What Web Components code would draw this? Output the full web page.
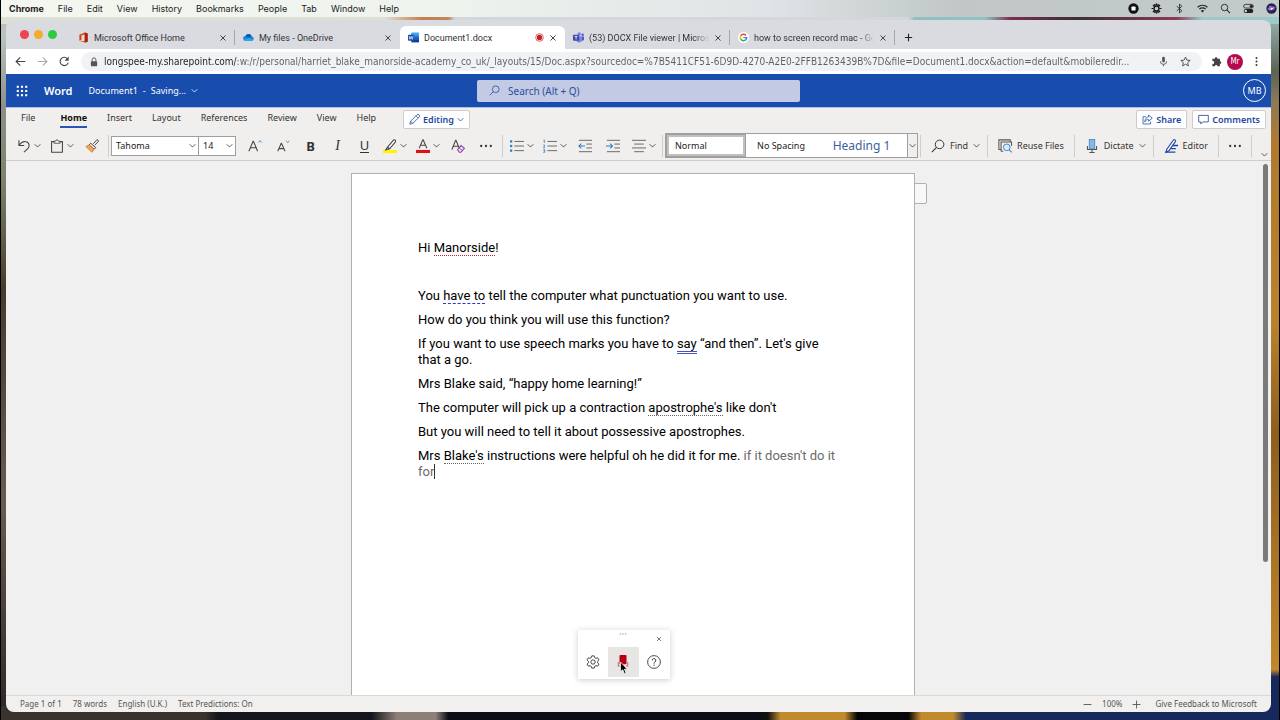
<!DOCTYPE html>
<html lang="en">
<head>
<meta charset="utf-8">
<title>Document1.docx</title>
<style>
html, body { margin: 0; height: 100%; }
body { font-family: "Noto Sans", sans-serif; font-size: 9px; line-height: 12px; color: #333; }
</style>
</head>
<body>
<mac-desktop></mac-desktop>
<script>
const ICONS = {
  stop: '<circle cx="8" cy="8" r="7.5" fill="#111"/><rect x="5" y="5" width="6" height="6" rx="1" fill="#fff"/>',
  burst: '<g stroke="#111" stroke-width="1.8" fill="none"><circle cx="8" cy="8" r="3.6"/><path d="M8 .8v3M8 12.2v3M.8 8h3M12.2 8h3M2.9 2.9l2.2 2.2M10.9 10.9l2.2 2.2M2.9 13.1l2.2-2.2M10.9 5.1l2.2-2.2M5.2 1.3l1.2 2.8M9.6 11.9l1.2 2.8M10.8 1.3L9.6 4.1M6.4 11.9l-1.2 2.8"/></g>',
  bluetooth: '<path d="M4 4.6l7.4 6.6L8 14.6V1.4l3.4 3.4L4 11.4" fill="none" stroke="#222" stroke-width="1.2"/>',
  wifi: '<g fill="none" stroke="#222" stroke-width="1.7"><path d="M.8 6.2a10.2 10.2 0 0 1 14.4 0M3.4 9a6.5 6.5 0 0 1 9.2 0"/></g><path d="M5.6 11.2a3.4 3.4 0 0 1 4.8 0L8 13.8z" fill="#222"/>',
  find: '<circle cx="6.6" cy="6.6" r="4.7" fill="none" stroke="#222" stroke-width="1.3"/><path d="M10 10l4.6 4.6" stroke="#222" stroke-width="1.5"/>',
  control: '<rect x="1" y="2" width="14" height="5.4" rx="2.7" fill="none" stroke="#222" stroke-width="1.2"/><rect x="1" y="8.8" width="14" height="5.6" rx="2.8" fill="#222"/><circle cx="12" cy="4.7" r="2.2" fill="#222"/><circle cx="4" cy="11.6" r="1.7" fill="#ddd"/>',
  siri: '<circle cx="8" cy="8" r="7.5" fill="#2a2350"/><path d="M2 9c3-5 9-5 12-2-4 4-8 5-12 2z" fill="#4a8fe8"/><path d="M4 5c4-2 7 1 8 5-4 0-7-2-8-5z" fill="#d64fae"/><path d="M6 8l5-1-3 3z" fill="#fff"/>',
  close: '<path d="M3 3l10 10M13 3L3 13" stroke="#333" stroke-width="1.8"/>',
  plus: '<path d="M8 1.5v13M1.5 8h13" stroke="#222" stroke-width="2"/>',
  office: '<path d="M2 4L10 .8l4 1.2v12l-4 1.2-8-2.6 7.6 1V3.6L5 4.8v6.4l-3 1.4z" fill="#d9400f"/><path d="M10 .8l4 1.2v12l-4 1.2z" fill="#a8220c"/>',
  onedrive: '<path d="M4 13a3.6 3.6 0 0 1-.4-7.2A5 5 0 0 1 12.6 6 3.6 3.6 0 0 1 13 13z" fill="#1683d8"/><path d="M3.6 5.8A5 5 0 0 1 12.6 6L8 9z" fill="#0b5cad"/><path d="M1 11.5L8 8.4l6.6 3A3 3 0 0 1 13 13H4a3.4 3.4 0 0 1-3-1.5z" fill="#2ba7ef"/>',
  word: '<rect x="5" y="1" width="11" height="14" rx="1" fill="#2b7cd3"/><path d="M5 1h11v4H5z" fill="#41a5ee"/><path d="M5 11h11v4H5z" fill="#103f91"/><path d="M5 8h11v3H5z" fill="#185abd"/><rect x="0" y="4" width="9" height="8.6" rx="1" fill="#1a4fa8"/><path d="M1.6 6l1.2 4.6L4.5 6.4l1.7 4.2L7.4 6" fill="none" stroke="#fff" stroke-width="1"/>',
  teams: '<circle cx="9" cy="3" r="2.6" fill="#7b83eb"/><circle cx="14" cy="4" r="1.8" fill="#5059c9"/><path d="M12 6.4h4v4.4a2.6 2.6 0 0 1-4 1z" fill="#5059c9"/><path d="M5 6.4h8v5a4 4 0 0 1-8 0z" fill="#7b83eb"/><rect x="0" y="4" width="9" height="8.6" rx="1" fill="#4049a8"/><path d="M2.4 6.4h4.2M4.5 6.4v4.4" stroke="#fff" stroke-width="1.1"/>',
  google: '<circle cx="8" cy="8" r="8" fill="#fff"/><g fill="none" stroke-width="2.1"><path d="M11.6 5A4.7 4.7 0 0 0 4 5.6" stroke="#ea4335"/><path d="M4 5.5a4.7 4.7 0 0 0 0 5" stroke="#fbbc05"/><path d="M3.9 10.4a4.7 4.7 0 0 0 7.4 1" stroke="#34a853"/><path d="M8 8.2h4.7a4.7 4.7 0 0 1-1.5 3.3" stroke="#4285f4"/></g>',
  rec: '<circle cx="8" cy="8" r="6.8" fill="none" stroke="#c5221f" stroke-width="1.2"/><circle cx="8" cy="8" r="4.7" fill="#c5221f"/>',
  back: '<path d="M15 8H2M7.6 2L1.6 8l6 6" fill="none" stroke="#444" stroke-width="1.6"/>',
  forward: '<path d="M1 8h13M8.4 2l6 6-6 6" fill="none" stroke="#aaa" stroke-width="1.6"/>',
  reload: '<path d="M13.4 9.6A6 6 0 1 1 12.2 4" fill="none" stroke="#444" stroke-width="1.6"/><path d="M14 .8v6H8z" fill="#444"/>',
  lock: '<rect x="3" y="6.6" width="10" height="8" rx="1" fill="#555"/><path d="M5 7V4.4a3 3 0 0 1 6 0V7" fill="none" stroke="#555" stroke-width="1.5"/>',
  mic: '<rect x="6" y="1" width="4" height="8.4" rx="2" fill="#555"/><path d="M3.4 7.6a4.6 4.6 0 0 0 9.2 0M8 12.2V15" fill="none" stroke="#555" stroke-width="1.3"/>',
  star: '<path d="M8 1.5l2 4.5 4.8.4-3.6 3.2 1 4.8L8 11.9l-4.2 2.5 1-4.8L1.2 6.4 6 6z" fill="none" stroke="#444" stroke-width="1.3"/>',
  puzzle: '<path d="M2 4h3.4a2 2 0 1 1 4 0H13v3.6a2 2 0 1 1 0 4V15H9.4a1.9 1.9 0 1 0-3.8 0H2v-3.6a2 2 0 1 0 0-3.8z" fill="#444"/>',
  kebab: '<g fill="#333"><circle cx="8" cy="2.8" r="1.4"/><circle cx="8" cy="8" r="1.4"/><circle cx="8" cy="13.2" r="1.4"/></g>',
  waffle: '<g fill="#fff"><rect x="1" y="1" width="2.8" height="2.8"/><rect x="6.6" y="1" width="2.8" height="2.8"/><rect x="12.2" y="1" width="2.8" height="2.8"/><rect x="1" y="6.6" width="2.8" height="2.8"/><rect x="6.6" y="6.6" width="2.8" height="2.8"/><rect x="12.2" y="6.6" width="2.8" height="2.8"/><rect x="1" y="12.2" width="2.8" height="2.8"/><rect x="6.6" y="12.2" width="2.8" height="2.8"/><rect x="12.2" y="12.2" width="2.8" height="2.8"/></g>',
  chevron: '<path d="M1.5 5L8 11.5 14.5 5" fill="none" stroke="currentColor" stroke-width="1.8"/>',
  lens: '<circle cx="9.8" cy="6.2" r="4.9" fill="none" stroke="currentColor" stroke-width="1.1"/><path d="M6.3 9.7L1 15" stroke="currentColor" stroke-width="1.2"/>',
  pencil: '<path d="M1.2 14.8l1.2-4.4L11.6 1.2a1.9 1.9 0 0 1 3.2 3.2L5.6 13.6zM2.4 10.4l3.2 3.2M10.2 2.6l3.2 3.2" fill="none" stroke="currentColor" stroke-width="1.1"/>',
  share: '<path d="M6 4H1.5v10.5h11V11M9.5 1.5L15 6l-5.500 4.500V8C7 8 5.400 9 4 11.500 4.500 7 6.500 4.500 9.500 4.200z" fill="none" stroke="currentColor" stroke-width="1.1"/>',
  comment: '<path d="M1 2h14v9.500H7L4 14.500v-3H1z" fill="none" stroke="currentColor" stroke-width="1.2"/>',
  undo: '<path d="M2.200 1.500v6h6M2.200 7.200C5 3.500 8.500 2 11.500 3.500c3 1.700 3.200 5 .8 7.500L8 15" fill="none" stroke="#444" stroke-width="1.200"/>',
  clip: '<path d="M4.500 3H1.800v12.200h12.400V3h-2.700" fill="none" stroke="#444" stroke-width="1.200"/><path d="M4.500 4.800V2.500h2a1.500 1.500 0 0 1 3 0h2v2.300z" fill="#fff" stroke="#444"/>',
  painter: '<path d="M9.500 5.500L13 1.400a1.300 1.300 0 0 1 2 1.800L11.200 7" fill="#eee" stroke="#444" stroke-width="1.100"/><path d="M6.500 4.800l5.800 5-1.800 2-5.800-5z" fill="#eee" stroke="#444" stroke-width="1.100"/><path d="M4.700 6.800l5.600 5L8 15.200 1 8.600z" fill="#f3a660" stroke="#d9731a" stroke-width="1"/>',
  growA: '<g fill="none" stroke="#444" stroke-width="1.200"><path d="M1 14L5.800 2.500h.4L11 14M2.700 10h6.600"/></g><path d="M12 4l1.900-2.200L15.800 4" fill="none" stroke="#3a86c8"/>',
  shrinkA: '<g fill="none" stroke="#444" stroke-width="1.200"><path d="M2 14L6 5h.300L10.300 14M3.500 11h5.300"/></g><path d="M11.500 2l1.900 2.200L15.300 2" fill="none" stroke="#3a86c8"/>',
  highlight: '<rect x="0" y="12.500" width="16" height="3.500" fill="#fff500"/><path d="M5 9.500L11.700 1.500a1.500 1.500 0 0 1 2.300 2L7.800 11zM5 9.500l-1.800 2.800 4.600-1.300" fill="#fff" stroke="#444" stroke-width="1.200"/>',
  fontcolor: '<rect x="0" y="12.500" width="16" height="3.500" fill="#e01010"/><path d="M3.600 10.500L7.800.8h.4l4.200 9.700M5 7.200h6" fill="none" stroke="#444" stroke-width="1.200"/>',
  clear: '<path d="M1 12L5.300 1.500h.4L9.500 10.500M2.600 8.300h6" fill="none" stroke="#444" stroke-width="1.200"/><path d="M7.500 12l4-4.500 3.800 3.200-4 4.500H9.500z" fill="#f0e0f4" stroke="#8a3fa0" stroke-width="1.200"/><path d="M9.300 10l3.800 3.300" stroke="#8a3fa0"/>',
  dots: '<g fill="#333"><circle cx="2.500" cy="8" r="1.300"/><circle cx="8" cy="8" r="1.300"/><circle cx="13.500" cy="8" r="1.300"/></g>',
  bullets: '<g fill="#2f7fc2"><rect x="0" y="1.500" width="2.600" height="2.600"/><rect x="0" y="6.700" width="2.600" height="2.600"/><rect x="0" y="12" width="2.600" height="2.600"/></g><path d="M5 2.800h11M5 8h11M5 13.300h11" stroke="#666" stroke-width="1.100"/>',
  numbers: '<path d="M.5 1.500l1-.5v3.600M.3 6.800h1.500v1.300L.4 9.700h1.800M.3 11.800h1.600v3.500H.3M.6 13.500h1.300" fill="none" stroke="#2f7fc2" stroke-width=".9"/><path d="M5 2.800h11M5 8h11M5 13.300h11" stroke="#666" stroke-width="1.100"/>',
  outdent: '<path d="M1 1.500h15M9.500 5.800H16M9.500 10.200H16M1 14.500h15" stroke="#666" stroke-width="1.100"/><path d="M8 8H1M3.800 5.200L1 8l2.800 2.800" fill="none" stroke="#2f7fc2" stroke-width="1.200"/>',
  indent: '<path d="M1 1.500h15M9.500 5.800H16M9.500 10.200H16M1 14.500h15" stroke="#666" stroke-width="1.100"/><path d="M0 8h7.500M4.700 5.200L7.500 8l-2.800 2.800" fill="none" stroke="#2f7fc2" stroke-width="1.200"/>',
  align: '<path d="M0 1.500h16M2.500 5.800h11M0 10.200h16M2.500 14.500h11" stroke="#666" stroke-width="1.100"/>',
  reuse: '<path d="M3 12H1V1h13v2M3.500 14V3.500H15.500V8M6 14H3.500" fill="none" stroke="#555" stroke-width="1.200"/><circle cx="10" cy="9.500" r="3.800" fill="#dbeaf8" stroke="#3a86c8" stroke-width="1.100"/><path d="M12.800 12.300l3 3" stroke="#3a86c8" stroke-width="1.200"/>',
  dictate: '<rect x="4.800" y=".6" width="6.400" height="10.800" fill="#83b9ea" stroke="#3f79b5" stroke-width=".8"/><path d="M2.800 8v4h10.400V8M8 12v3.400M5 15.400h6" fill="none" stroke="#555" stroke-width="1.200"/>',
  editor: '<path d="M3 12L10.600 1.400a1.400 1.400 0 0 1 2.400 1.600L5.800 13.200 2.600 15z" fill="#fff" stroke="#1b49a5" stroke-width="1.300"/><path d="M9.500 7.500H16M8 11h5.500M1 15h12" stroke="#1b49a5" stroke-width="1.600"/>',
  gear: '<path d="M6.600 1h2.800l.5 2 1.500.8 2-.6 1.400 2.400-1.500 1.500v1.800l1.500 1.500-1.400 2.400-2-.6-1.500.8-.5 2H6.600l-.5-2-1.500-.8-2 .6-1.400-2.400 1.500-1.500V7.100L1.200 5.600l1.400-2.400 2 .6L6.100 3z" fill="none" stroke="#333"/><circle cx="8" cy="8" r="2.500" fill="none" stroke="#333"/>',
  help: '<circle cx="8" cy="8" r="7.300" fill="none" stroke="#333"/><path d="M5.900 6.200A2.100 2.100 0 1 1 9 8c-.7.500-1 .9-1 1.900M8 11v1.300" fill="none" stroke="#333" stroke-width="1.100"/>',
  record: '<rect x="4" y="0" width="8" height="10.500" rx="1" fill="#b3000c"/><path d="M2.600 8v4.500h3M13.400 8v4.500h-2M8 10v4.500" stroke="#d2686e" stroke-width="1.200" fill="none"/>',
  pointer: '<path d="M2 0v13l3-2.800L7.200 15.500l2.200-1L7.200 9.500H11z" fill="#000" stroke="#fff"/>',
  minus: '<path d="M1 8h14" stroke="#555" stroke-width="1.600"/>',
  add: '<path d="M1 8h14M8 1v14" stroke="#555" stroke-width="1.600"/>'
};

const BASE = `
  *, *::before, *::after { box-sizing: border-box; }
  button, input, select { font: inherit; color: inherit; margin: 0; padding: 0; border: 0; background: none; border-radius: 0; outline: 0; }
  button { display: flex; align-items: center; justify-content: center; white-space: nowrap; }
  a { color: inherit; text-decoration: none; }
  nav { display: flex; }
`;

function define(name, css, html) {
  const template = document.createElement('template');
  template.innerHTML = `<style>${BASE}${css}</style>${html}`;
  customElements.define(name, class extends HTMLElement {
    constructor() {
      super();
      this.attachShadow({ mode: 'open' }).append(template.content.cloneNode(true));
    }
  });
}

/* Single glyph; size comes from --size */
customElements.define('ui-icon', class extends HTMLElement {
  static observedAttributes = ['name'];
  constructor() { super(); this.attachShadow({ mode: 'open' }); }
  attributeChangedCallback() {
    this.shadowRoot.innerHTML = `<style>:host{display:block;flex:none;width:var(--size,14px);height:var(--size,14px)}svg{display:block;width:100%;height:100%;overflow:visible}</style><svg viewBox="0 0 16 16" aria-hidden="true">${ICONS[this.getAttribute('name')]}</svg>`;
  }
});

/* Browser tab: the title goes in the slot */
customElements.define('browser-tab', class extends HTMLElement {
  constructor() { super(); this.attachShadow({ mode: 'open' }); }
  connectedCallback() {
    const rec = this.hasAttribute('recording') ? '<ui-icon name="rec" class="rec"></ui-icon>' : '';
    this.shadowRoot.innerHTML = `<style>${BASE}
      :host { display: flex; align-items: center; flex: 0 1 165px; min-width: 0; height: 23px; padding: 0 7px 0 8px; gap: 5px; border-right: 1px solid transparent; box-sizing: border-box; --size: 11px; }
      :host([divider]) { border-image: linear-gradient(transparent 5px, #a3a6ab 5px 18px, transparent 18px) 1; }
      :host([active]) { background: #fff; border-radius: 6px 6px 0 0; }
      .title { flex: 1; min-width: 0; overflow: hidden; white-space: nowrap; }
      :host([fade]) .title { mask-image: linear-gradient(90deg, #000 88%, transparent); }
      .rec { --size: 9px; }
      .x { --size: 8px; }
      </style><ui-icon name="${this.getAttribute('icon')}"></ui-icon><span class="title"><slot></slot></span>${rec}<button class="x" aria-label="Close tab"><ui-icon name="close"></ui-icon></button>`;
  }
});

/* Ribbon command: icon, optional label and optional menu arrow */
customElements.define('ribbon-command', class extends HTMLElement {
  constructor() { super(); this.attachShadow({ mode: 'open' }); }
  connectedCallback() {
    const icon = this.getAttribute('icon');
    const menu = this.hasAttribute('menu') ? '<ui-icon class="arrow" name="chevron"></ui-icon>' : '';
    this.shadowRoot.innerHTML = `<style>${BASE}
      :host { display: block; flex: none; }
      button { height: 24px; width: 28px; color: #333; }
      :host([letter]) button { width: 27px; font-size: 13px; }
      :host([menu]) button { width: 33px; gap: 3px; }
      :host([labelled]) button { width: auto; gap: 5px; padding: 0 8px; --size: 14px; }
      :host([labelled][menu]) button { padding-right: 5px; }
      .arrow { --size: 7px; }
      </style><button aria-label="${this.getAttribute('label')}">${icon ? `<ui-icon name="${icon}"></ui-icon>` : ''}<slot></slot>${menu}</button>`;
  }
});

define('mac-menubar', `
  :host { display: flex; align-items: center; justify-content: space-between; height: 17px; padding: 0 2px 0 8px; font: 9px/12px Inter, sans-serif; color: #1c1c1c;
    background: linear-gradient(90deg, #f4f7ef, #eef3ee 35%, #dfe4e6 60%, #c0c7c6 75%, #c3cbca); }
  nav { gap: 14px; }
  .status { display: flex; gap: 12px; --size: 11px; }
  strong { font-weight: 700; }
`, `
  <nav><strong>Chrome</strong><span>File</span><span>Edit</span><span>View</span><span>History</span><span>Bookmarks</span><span>People</span><span>Tab</span><span>Window</span><span>Help</span></nav>
  <div class="status"><ui-icon name="stop"></ui-icon><ui-icon name="burst"></ui-icon><ui-icon name="bluetooth"></ui-icon><ui-icon name="wifi"></ui-icon><ui-icon name="find"></ui-icon><ui-icon name="control"></ui-icon><ui-icon name="siri"></ui-icon></div>
`);

define('tab-strip', `
  :host { display: flex; align-items: flex-end; height: 29px; background: #d9dbe0; font: 9px/12px Roboto, sans-serif; color: #333; }
  .lights { display: flex; gap: 5px; width: 64px; padding: 0 0 10px 14px; }
  .lights i { width: 9px; height: 9px; border-radius: 50%; background: var(--c); }
  .new { height: 23px; width: 26px; --size: 9px; }
`, `
  <div class="lights"><i style="--c:#ee4452"></i><i style="--c:#f5ac2d"></i><i style="--c:#2fcb3e"></i></div>
  <browser-tab icon="office" divider>Microsoft Office Home</browser-tab>
  <browser-tab icon="onedrive">My files - OneDrive</browser-tab>
  <browser-tab icon="word" active recording>Document1.docx</browser-tab>
  <browser-tab icon="teams" divider fade>(53) DOCX File viewer | Micros</browser-tab>
  <browser-tab icon="google" divider fade>how to screen record mac - Go</browser-tab>
  <button class="new" aria-label="New tab"><ui-icon name="plus"></ui-icon></button>
`);

define('address-bar', `
  :host { display: flex; align-items: center; height: 25px; padding: 0 9px; background: #fff; font: 10px/14px "DejaVu Sans Condensed", "DejaVu Sans", sans-serif; --size: 11px; }
  .nav { width: 22px; justify-content: flex-start; }
  .box { flex: 1; display: flex; align-items: center; height: 19px; padding: 0 8px; gap: 5px; border-radius: 10px; background: #f1f2f5; margin-right: 9px; }
  .box button { width: 17px; }
  input { flex: 1; min-width: 0; height: 19px; color: #4c4f53; -webkit-text-fill-color: transparent; -webkit-background-clip: text; background-clip: text;
    background-image: linear-gradient(90deg, #1d1e20 133px, #5a5e63 133px); }
  .me { justify-content: center; width: 16px; height: 16px; border-radius: 50%; background: #b40a4e; color: #fff; font-size: 8px; margin: 0 8px 0 5px; }
  .lock { --size: 10px; }
`, `
  <button class="nav" aria-label="Back"><ui-icon name="back"></ui-icon></button>
  <button class="nav" aria-label="Forward"><ui-icon name="forward"></ui-icon></button>
  <button class="nav" aria-label="Reload"><ui-icon name="reload"></ui-icon></button>
  <div class="box"><ui-icon class="lock" name="lock"></ui-icon>
    <input aria-label="Address" value="longspee-my.sharepoint.com/:w:/r/personal/harriet_blake_manorside-academy_co_uk/_layouts/15/Doc.aspx?sourcedoc=%7B5411CF51-6D9D-4270-A2E0-2FFB1263439B%7D&amp;file=Document1.docx&amp;action=default&amp;mobileredir...">
    <button aria-label="Voice"><ui-icon name="mic"></ui-icon></button><button aria-label="Bookmark"><ui-icon name="star"></ui-icon></button></div>
  <button aria-label="Extensions"><ui-icon name="puzzle"></ui-icon></button>
  <button class="me" aria-label="Profile">Mr</button>
  <button aria-label="Menu"><ui-icon name="kebab"></ui-icon></button>
`);

define('word-header', `
  :host { display: grid; grid-template-columns: 1fr minmax(200px, 323px) 1fr; align-items: center; height: 34px; padding: 0 5px; background: #194dad; border-bottom: 1px solid #a9c2ec; color: #fff; box-sizing: border-box; }
  .left { display: flex; align-items: center; gap: 16px; padding-left: 5px; --size: 12px; }
  .left strong { font-size: 11px; font-weight: 600; }
  .doc { gap: 5px; }
  .doc ui-icon { --size: 7px; }
  label { display: flex; align-items: center; gap: 8px; height: 22px; padding: 0 12px; border-radius: 2px; background: #c3cae3; color: #1f489c; --size: 11px; font-size: 10px; }
  input { flex: 1; min-width: 0; }
  input::placeholder { color: #2a4f9f; opacity: 1; }
  .me { justify-self: end; width: 23px; height: 23px; border: 1px solid #fff; border-radius: 50%; }
`, `
  <div class="left"><button aria-label="App launcher"><ui-icon name="waffle"></ui-icon></button><strong>Word</strong>
  <button class="doc"><span>Document1</span><span>-</span><span>Saving...</span><ui-icon name="chevron"></ui-icon></button></div>
  <label><ui-icon name="lens"></ui-icon><input type="search" aria-label="Search" placeholder="Search (Alt + Q)"></label>
  <button class="me">MB</button>
`);

define('ribbon-tabs', `
  :host { display: flex; align-items: flex-start; height: 23px; padding: 2px 5px 0 15px; box-sizing: border-box; }
  nav { gap: 20px; }
  nav a { height: 18px; line-height: 15px; border-bottom: 2px solid transparent; }
  nav a:first-child { margin-right: 5px; }
  nav a[aria-current] { font-weight: 700; color: #111; border-color: #2a55b5; }
  button { height: 19px; padding: 0 5px; gap: 3px; background: #fff; border: 1px solid #cfcdcb; border-radius: 2px; color: #1d489f; font-weight: 600; --size: 11px; }
  .mode { margin-left: 27px; }
  .mode .arrow { --size: 7px; }
  .right { display: flex; gap: 5px; margin-left: auto; }
`, `
  <nav><a href="#file">File</a><a href="#home" aria-current="page">Home</a><a href="#insert">Insert</a><a href="#layout">Layout</a><a href="#references">References</a><a href="#review">Review</a><a href="#view">View</a><a href="#help">Help</a></nav>
  <button class="mode"><ui-icon name="pencil"></ui-icon>Editing<ui-icon class="arrow" name="chevron"></ui-icon></button>
  <div class="right"><button><ui-icon name="share"></ui-icon>Share</button><button><ui-icon name="comment"></ui-icon>Comments</button></div>
`);

define('style-gallery', `
  :host { display: flex; flex: none; width: 253px; height: 25px; border: 1px solid #a19f9d; background: #fff; box-sizing: border-box; }
  button { padding: 0 8px; }
  .on { width: 80px; justify-content: flex-start; padding: 0 6px; border: 3px solid #c2c0be; outline: 1px solid #a19f9d; outline-offset: -1px; color: #222; }
  .plain { width: 70px; color: #222; }
  .h1 { flex: 1; font-size: 12px; line-height: 18px; color: #3d5f9e; }
  .more { width: 10px; padding: 0; border-left: 1px solid #a19f9d; background: #f0efee; --size: 7px; }
`, `<button class="on">Normal</button><button class="plain">No Spacing</button><button class="h1">Heading 1</button><button class="more" aria-label="More styles"><ui-icon name="chevron"></ui-icon></button>`);

define('ribbon-toolbar', `
  :host { display: flex; align-items: center; height: 30px; padding: 0 2px 0 6px; border-bottom: 1px solid #d0cecc; box-sizing: border-box; }
  .sep { flex: none; width: 1px; height: 22px; margin: 0 2px; background: #cfcdcb; }
  .combo { display: flex; align-items: center; position: relative; height: 20px; background: #fff; border: 1px solid #a19f9d; }
  .combo + .combo { border-left: 0; margin-right: 5px; }
  .combo select { appearance: none; width: 86px; height: 18px; padding: 0 4px; color: #222; }
  .combo + .combo select { width: 36px; }
  .combo ui-icon { position: absolute; right: 2px; --size: 7px; pointer-events: none; }
  .more { margin-left: auto; align-self: flex-end; width: 10px; height: 12px; --size: 7px; }
  .b { font-weight: 700; } .i { font: italic 14px/18px "Liberation Serif", serif; } .u { border-bottom: 1px solid #333; line-height: 13px; }
`, `
  <ribbon-command icon="undo" menu label="Undo"></ribbon-command><ribbon-command icon="clip" menu label="Paste"></ribbon-command><ribbon-command icon="painter" label="Format painter"></ribbon-command>
  <span class="sep"></span>
  <label class="combo"><select aria-label="Font"><option>Tahoma</option></select><ui-icon name="chevron"></ui-icon></label><label class="combo"><select aria-label="Font size"><option>14</option></select><ui-icon name="chevron"></ui-icon></label>
  <ribbon-command icon="growA" label="Grow font"></ribbon-command><ribbon-command icon="shrinkA" label="Shrink font"></ribbon-command>
  <ribbon-command letter label="Bold"><span class="b">B</span></ribbon-command><ribbon-command letter label="Italic"><span class="i">I</span></ribbon-command><ribbon-command letter label="Underline"><span class="u">U</span></ribbon-command>
  <ribbon-command icon="highlight" menu label="Highlight"></ribbon-command><ribbon-command icon="fontcolor" menu label="Font colour"></ribbon-command><ribbon-command icon="clear" label="Clear formatting"></ribbon-command><ribbon-command icon="dots" label="More font options"></ribbon-command>
  <span class="sep"></span>
  <ribbon-command icon="bullets" menu label="Bullets"></ribbon-command><ribbon-command icon="numbers" menu label="Numbering"></ribbon-command><ribbon-command icon="outdent" label="Decrease indent"></ribbon-command><ribbon-command icon="indent" label="Increase indent"></ribbon-command><ribbon-command icon="align" menu label="Alignment"></ribbon-command>
  <span class="sep"></span><style-gallery></style-gallery><span class="sep"></span>
  <ribbon-command icon="lens" labelled menu label="Find">Find</ribbon-command><span class="sep"></span>
  <ribbon-command icon="reuse" labelled label="Reuse Files">Reuse Files</ribbon-command><span class="sep"></span>
  <ribbon-command icon="dictate" labelled menu label="Dictate">Dictate</ribbon-command><span class="sep"></span>
  <ribbon-command icon="editor" labelled label="Editor">Editor</ribbon-command><span class="sep"></span>
  <ribbon-command icon="dots" label="More"></ribbon-command><span class="sep"></span>
  <button class="more" aria-label="Collapse ribbon"><ui-icon name="chevron"></ui-icon></button>
`);

define('document-page', `
  :host { display: block; position: relative; width: 564px; padding: 66px 72px 66px 66px; background: #fff; border: 1px solid #b0b0b0; border-bottom: 0; font: 13px/16px Roboto, sans-serif; color: #000; box-sizing: border-box; }
  p { margin: 0 0 8px; min-height: 16px; }
  u { text-decoration: none; border-bottom: 1px dotted #666; }
  .spell { border-color: #d01c34; }
  .clarity { border-bottom: 1px dashed #2f34d8; }
  .grammar { border-bottom: 3px double #4353d0; }
  .interim { color: #6b6b6b; }
  .caret { border-right: 1px solid #333; }
  .note { position: absolute; left: 100%; top: 9px; width: 13px; height: 21px; border: 1px solid #b0b0b0; border-radius: 0 2px 2px 0; background: #f8f8f8; }
`, `
  <button class="note" aria-label="Comments on this page"></button>
  <p>Hi <u class="spell">Manorside</u>!</p><p></p>
  <p>You <u class="clarity">have to</u> tell the computer what punctuation you want to use.</p>
  <p>How do you think you will use this function?</p>
  <p>If you want to use speech marks you have to <u class="grammar">say</u> “and then”. Let's give <span>that a go.</span></p>
  <p>Mrs Blake said, “happy home learning!”</p>
  <p>The computer will pick up a contraction <u>apostrophe's</u> like don't</p>
  <p>But you will need to tell it about possessive apostrophes.</p>
  <p>Mrs <u>Blake's</u> instructions were helpful oh he did it for me. <span class="interim">if it doesn't do it <span class="caret">for</span></span></p>
`);

define('dictation-panel', `
  :host { display: grid; grid-template: 17px 30px / repeat(3, 1fr); width: 92px; padding-bottom: 2px; background: #fff; box-shadow: 0 1px 6px #0003; border-radius: 1px; }
  .grip { grid-column: 2; justify-self: center; --size: 8px; opacity: .5; }
  .x { --size: 6px; justify-self: end; width: 20px; }
  .tool { --size: 14px; position: relative; }
  .live { background: #e8e6e4; }
  .pointer { position: absolute; left: 11px; top: 15px; --size: 12px; }
`, `
  <ui-icon class="grip" name="dots"></ui-icon><button class="x" aria-label="Close dictation"><ui-icon name="close"></ui-icon></button>
  <button class="tool" aria-label="Dictation settings"><ui-icon name="gear"></ui-icon></button>
  <button class="tool live" aria-label="Stop dictation"><ui-icon name="record"></ui-icon><ui-icon class="pointer" name="pointer"></ui-icon></button>
  <button class="tool" aria-label="Help"><ui-icon name="help"></ui-icon></button>
`);

define('document-canvas', `
  :host { display: flex; position: relative; flex: 1; min-height: 0; overflow: hidden; background: #f0f0f0; }
  .view { flex: 1; display: flex; justify-content: center; align-items: stretch; padding-top: 12px; }
  .bar { width: 11px; padding: 3px 3px 0; }
  .thumb { height: 75%; border-radius: 3px; background: #7a7a7a; }
  dictation-panel { position: absolute; bottom: 16px; left: calc(50% - 61px); }
`, `<div class="view"><document-page></document-page></div><div class="bar"><div class="thumb"></div></div><dictation-panel></dictation-panel>`);

define('status-bar', `
  :host { display: flex; align-items: center; gap: 11px; height: 17px; padding: 0 14px; background: #f1f0ee; border-top: 1px solid #dbd9d6; font-size: 8px; color: #555; box-sizing: border-box; }
  .zoom { display: flex; align-items: center; gap: 10px; margin-left: auto; --size: 9px; }
  a { margin-left: 3px; }
`, `
  <span>Page 1 of 1</span><span>78 words</span><span>English (U.K.)</span><span>Text Predictions: On</span>
  <div class="zoom"><button aria-label="Zoom out"><ui-icon name="minus"></ui-icon></button><span>100%</span><button aria-label="Zoom in"><ui-icon name="add"></ui-icon></button></div>
  <a href="#feedback">Give Feedback to Microsoft</a>
`);

define('browser-window', `
  :host { display: flex; flex-direction: column; min-height: 0; overflow: hidden; border-radius: 8px; }
  .ribbon { background: #f0efee; }
`, `
  <tab-strip></tab-strip><address-bar></address-bar><word-header></word-header>
  <div class="ribbon"><ribbon-tabs></ribbon-tabs><ribbon-toolbar></ribbon-toolbar></div>
  <document-canvas></document-canvas><status-bar></status-bar>
`);

define('mac-desktop', `
  :host { display: flex; flex-direction: column; height: 100vh; min-height: 480px; border-left: 1px solid #000; border-right: 1px solid #000; box-sizing: border-box;
    background:
      linear-gradient(90deg, #dde0d4 30%, #c77c4c 33%, #b98a62 35%, #d3d6da 35.500% 71%, #8fc0c4 71.500% 77%, #7b2f4c 79%, #3a3036 84%, #8a3b55 92%, #9cc9cb 94%) top / 100% 24px no-repeat,
      linear-gradient(90deg, #3a322c 16%, #15171e 17% 29%, #8d8078 31% 34%, #0b0e16 35% 59%, #111 60%, #c18a2d 61% 66%, #060606 67% 71%, #c18a2d 72% 74.500%, #16285c 75.500%) bottom / 100% 14px no-repeat,
      linear-gradient(#b9c2bd 5%, #8b8f88 15%, #7c8468 25%, #4a3a2c 40%, #6a5a50 70%, #2b2626) left / 50% 100% no-repeat,
      linear-gradient(#a7cccb, #5c6353 10%, #8d7a58 14%, #b07a2e 20%, #b9822c 45%, #8d5f1c 60%, #c2872c 93%, #16285c 94%) right / 50% 100% no-repeat; }
  browser-window { flex: 1; margin: 3px 8px 8px 5px; }
`, `<mac-menubar></mac-menubar><browser-window></browser-window>`);
</script>
</body>
</html>
